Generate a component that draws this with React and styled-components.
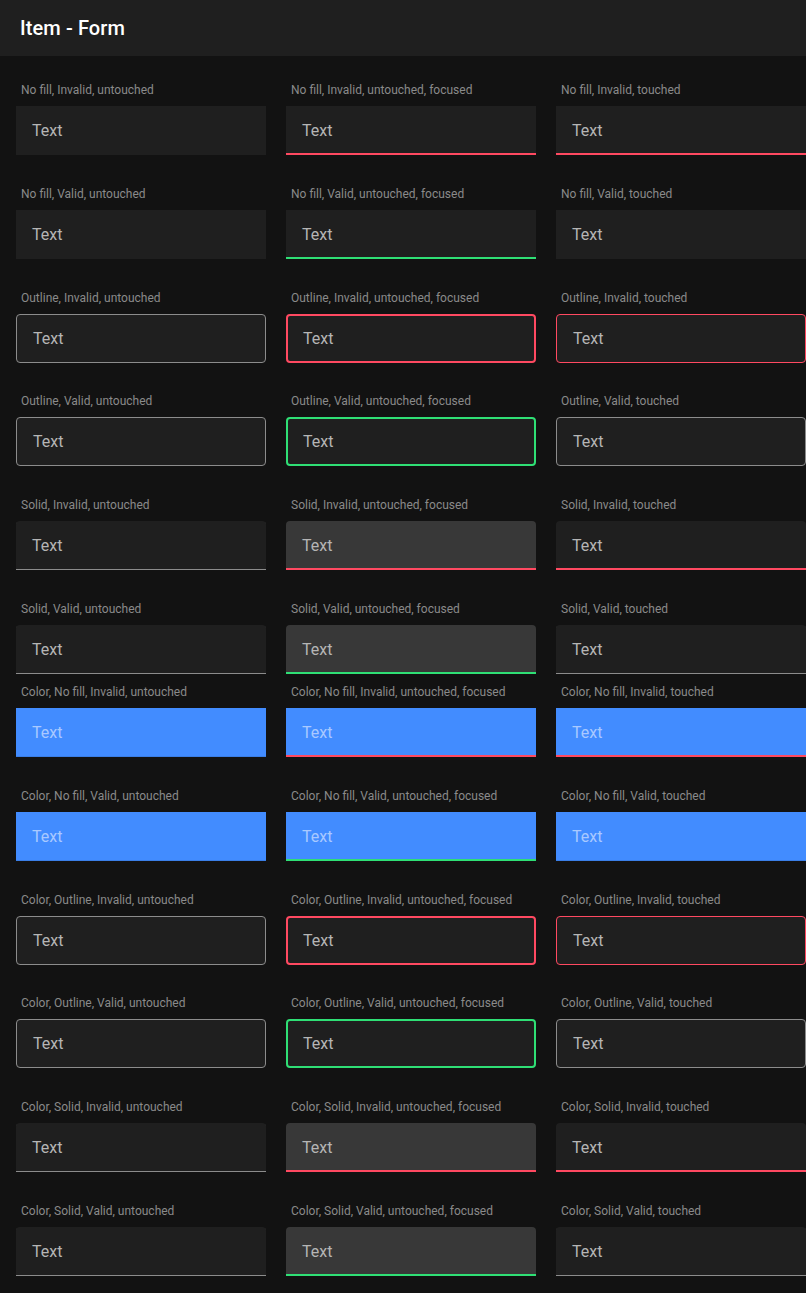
import React from 'react';
import styled, { createGlobalStyle, css } from 'styled-components';

const RED = '#ff4961';
const GREEN = '#2fdf75';
const BLUE = '#428cff';
const BLUE_LINE = '#3a7ee6';
const GRAY = '#8c8c8c';

const GlobalStyle = createGlobalStyle`
  html, body {
    margin: 0;
    padding: 0;
    background: #121212;
    overflow: hidden;
  }
  body {
    font-family: Roboto, "Noto Sans", "Liberation Sans", sans-serif;
    -webkit-font-smoothing: antialiased;
  }
`;

const Page = styled.div`
  min-height: 100vh;
  background: #121212;
`;

const Header = styled.header`
  height: 56px;
  display: flex;
  align-items: center;
  padding: 0 20px;
  background: #1f1f1f;
`;

const Title = styled.h1`
  margin: 0;
  font-size: 20px;
  font-weight: 500;
  letter-spacing: 0.1px;
  color: #ffffff;
`;

const Section = styled.section`
  display: grid;
  grid-template-columns: repeat(3, 250px);
  column-gap: 20px;
  row-gap: 30.8px;
  padding: ${props => props.$top}px 0 0 16px;
`;

const Cell = styled.div`
  display: flex;
  flex-direction: column;
`;

const Caption = styled.div`
  font-size: 12px;
  line-height: 16px;
  color: #8a8a8a;
  padding-left: 5px;
  margin-bottom: 8px;
  white-space: nowrap;
`;

// works out which line the field gets from its fill and state
function edge({ $fill, $color, $state, $valid }) {
  if ($state === 'focused') return { c: $valid ? GREEN : RED, w: 2 };
  if ($state === 'touched' && !$valid) return { c: RED, w: $fill === 'outline' ? 1 : 2 };
  if ($fill === 'none') return $color ? { c: BLUE_LINE, w: 1 } : null;
  return { c: GRAY, w: 1 };
}

function background({ $fill, $color, $state }) {
  if ($fill === 'solid' && $state === 'focused') return '#383838';
  if ($fill === 'none' && $color) return BLUE;
  return '#1f1f1f';
}

const Field = styled.div`
  box-sizing: border-box;
  height: 49px;
  display: flex;
  align-items: center;
  background: ${background};
  color: ${props => (props.$fill === 'none' && props.$color ? '#a9c9ff' : '#b5b5b5')};
  font-size: 16px;

  ${props => {
    const e = edge(props);
    if (props.$fill === 'outline') {
      return css`
        border: ${e.w}px solid ${e.c};
        border-radius: 4px;
        padding-left: ${17 - e.w}px;
      `;
    }
    return css`
      padding-left: 16px;
      box-shadow: ${e ? `inset 0 -${e.w}px 0 ${e.c}` : 'none'};
      border-radius: ${props.$fill === 'solid' ? '4px 4px 0 0' : '0'};
    `;
  }}
`;

const fills = [
  { key: 'none', name: 'No fill' },
  { key: 'outline', name: 'Outline' },
  { key: 'solid', name: 'Solid' },
];

const states = [
  { key: 'untouched', name: 'untouched' },
  { key: 'focused', name: 'untouched, focused' },
  { key: 'touched', name: 'touched' },
];

function buildRows(color) {
  const rows = [];
  fills.forEach(fill => {
    [false, true].forEach(valid => {
      states.forEach(state => {
        const parts = [color ? 'Color' : null, fill.name, valid ? 'Valid' : 'Invalid', state.name];
        rows.push({
          label: parts.filter(Boolean).join(', '),
          fill: fill.key,
          valid,
          state: state.key,
          color,
        });
      });
    });
  });
  return rows;
}

const FormSection = ({ color, top }) => (
  <Section $top={top}>
    {buildRows(color).map(item => (
      <Cell key={item.label}>
        <Caption>{item.label}</Caption>
        <Field
          $fill={item.fill}
          $color={item.color}
          $state={item.state}
          $valid={item.valid}
        >
          Text
        </Field>
      </Cell>
    ))}
  </Section>
);

export default function App() {
  return (
    <Page>
      <GlobalStyle />
      <Header>
        <Title>Item - Form</Title>
      </Header>
      <FormSection color={false} top={26} />
      <FormSection color top={10} />
    </Page>
  );
}
